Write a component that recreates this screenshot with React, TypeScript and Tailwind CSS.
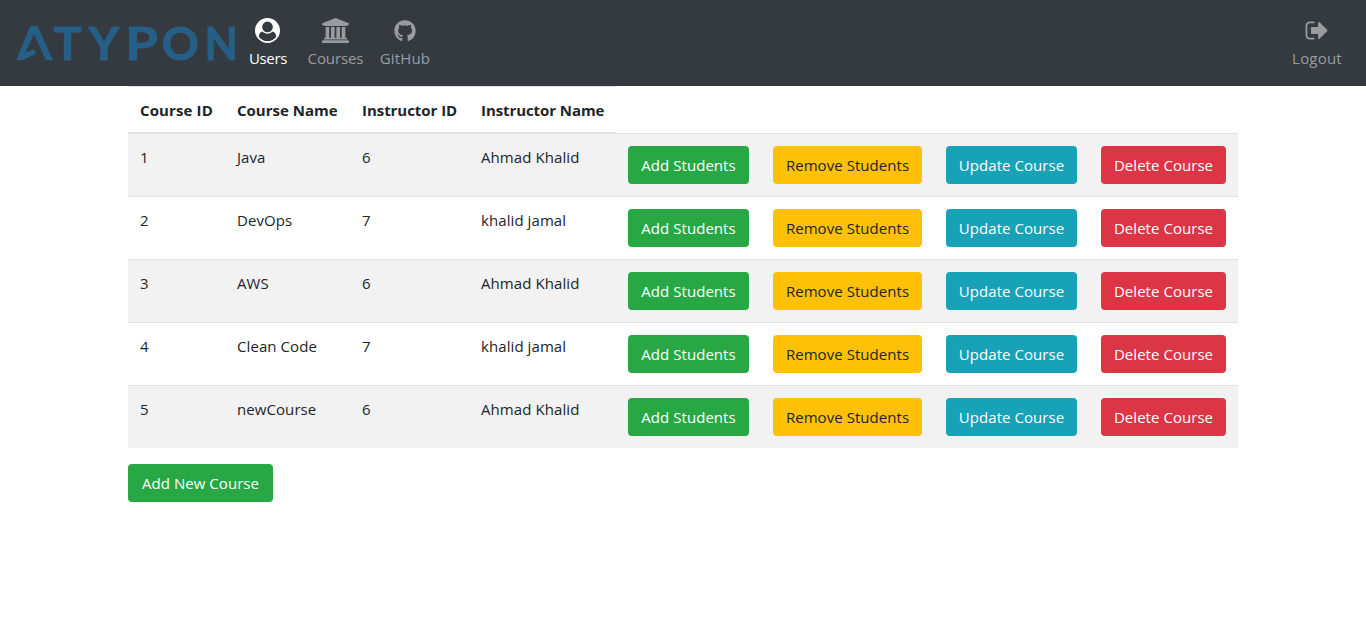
import type { ReactNode } from "react";
import { FaGithub } from "react-icons/fa";

const courses = [
  { id: 1, name: "Java", instructorId: 6, instructor: "Ahmad Khalid" },
  { id: 2, name: "DevOps", instructorId: 7, instructor: "khalid jamal" },
  { id: 3, name: "AWS", instructorId: 6, instructor: "Ahmad Khalid" },
  { id: 4, name: "Clean Code", instructorId: 7, instructor: "khalid jamal" },
  { id: 5, name: "newCourse", instructorId: 6, instructor: "Ahmad Khalid" },
];

function Logo() {
  return (
    <svg className="block h-[86px] w-[240px] overflow-visible" viewBox="0 0 240 86" fill="#265f86" role="img" aria-label="Atypon">
      <path d="M30.300 26h7.200L53 60.300h-7.200L34 34.200 25.500 52.600l8.700-3.400 1.900 4.600L22.700 60.300H16z" />
      <g fontFamily="Lato, sans-serif" fontWeight="700" fontSize="46.5" stroke="#265f86" strokeWidth="1">
        <text y="60" x="53.700 89">TY</text>
        <text transform="translate(125.2 60) scale(1.14 1)">P</text>
        <text transform="translate(162 60) scale(0.98 1)">O</text>
        <text transform="translate(204.800 60) scale(0.930 1)">N</text>
      </g>
    </svg>
  );
}

function UserIcon() {
  return (
    <svg className="block size-[25px]" viewBox="0 0 1792 1792" fill="currentColor" fillRule="evenodd">
      <path d="M1523 1339q-22-155-87.5-257.5t-184.5-118.5q-67 74-159.5 115.5t-195.5 41.5-195.5-41.5-159.5-115.5q-119 16-184.5 118.5t-87.5 257.5q106 150 271 237.5t356 87.5 356-87.5 271-237.5zm-243-699q0-159-112.5-271.5t-271.5-112.5-271.5 112.5-112.5 271.5 112.5 271.5 271.5 112.5 271.5-112.5 112.5-271.5zm512 256a896 896 0 1 1-1792 0 896 896 0 0 1 1792 0z" />
    </svg>
  );
}

function CoursesIcon() {
  return (
    <svg className="block h-[25px] w-[27px]" viewBox="0 0 1920 1792" fill="currentColor">
      <path d="M960 0l960 384v128h-128q0 26-20.500 45t-48.500 19h-1526q-28 0-48.500-19t-20.500-45h-128v-128zm-704 640h256v768h128v-768h256v768h128v-768h256v768h128v-768h256v768h59q28 0 48.500 19t20.500 45v64h-1664v-64q0-26 20.500-45t48.500-19h59v-768zm1595 960q28 0 48.500 19t20.500 45v128h-1920v-128q0-26 20.500-45t48.500-19h1782z" />
    </svg>
  );
}

function LogoutIcon() {
  return (
    <svg className="block h-[25px] w-[23px]" viewBox="24 0 1649 1792" fill="currentColor">
      <path d="M704 1440q0 4 1 20t.5 26.5-3 23.5-10 19.5-20.5 6.5h-320q-119 0-203.500-84.500t-84.500-203.500v-704q0-119 84.500-203.500t203.500-84.500h320q13 0 22.500 9.500t9.500 22.500q0 4 1 20t.5 26.5-3 23.5-10 19.5-20.5 6.5h-320q-66 0-113 47t-47 113v704q0 66 47 113t113 47h312l11.500 1 11.500 3 8 5.500 7 9 2 13.500zm928-544q0 26-19 45l-544 544q-19 19-45 19t-45-19-19-45v-288h-448q-26 0-45-19t-19-45v-384q0-26 19-45t45-19h448v-288q0-26 19-45t45-19 45 19l544 544q19 19 19 45z" />
    </svg>
  );
}

function NavItem({ icon, label, className, labelClass }: { icon: ReactNode; label: string; className: string; labelClass: string }) {
  return (
    <a className={`flex flex-col items-center pt-[17px] ${className}`}>
      <span className="flex h-[27px] items-center justify-center">{icon}</span>
      <span className={`mt-[2px] text-[15px] leading-6 whitespace-nowrap ${labelClass}`}>{label}</span>
    </a>
  );
}

function Button({ children, className }: { children: ReactNode; className: string }) {
  return (
    <button className={`flex h-[38px] items-center justify-center rounded-[4px] text-[15px] leading-6 tracking-[0.05px] whitespace-nowrap ${className}`}>
      {children}
    </button>
  );
}

export default function App() {
  return (
    <div className="min-h-[635px] bg-white font-['Open_Sans',sans-serif] text-[#212529]">
      <nav className="flex h-[86px] items-start bg-[#343a40]">
        <Logo />
        <NavItem className="w-[56px] text-white" icon={<span className="pr-px"><UserIcon /></span>} label="Users" labelClass="tracking-[-0.35px]" />
        <NavItem className="ml-[3px] w-[73px] text-[#999c9f]" icon={<CoursesIcon />} label="Courses" labelClass="tracking-[-0.1px]" />
        <NavItem className="w-[66px] text-[#999c9f]" icon={<FaGithub className="size-[22px]" />} label="GitHub" labelClass="tracking-[0.15px]" />
        <NavItem className="mr-4 ml-auto w-[66px] text-[#999c9f]" icon={<span className="pr-[2px]"><LogoutIcon /></span>} label="Logout" labelClass="tracking-[0.2px]" />
      </nav>
      <main className="ml-32 w-[1110px]">
        <div className="-mb-px grid h-[48px] w-[488px] grid-cols-[97px_125px_119px_147px] border-t border-b-2 border-[#dee2e6] pt-[11px] text-[15px] leading-6 font-bold whitespace-nowrap">
          <div className="pl-3 tracking-[0.12px]">Course ID</div>
          <div className="pl-3">Course Name</div>
          <div className="pl-3 tracking-[-0.05px]">Instructor ID</div>
          <div className="pl-3 tracking-[-0.08px]">Instructor Name</div>
        </div>
        {courses.map((c) => (
          <div
            key={c.id}
            className="grid h-[63px] grid-cols-[97px_125px_119px_147px_145px_173px_155px_149px] border-t border-[#dee2e6] text-[15px] leading-6 odd:bg-white even:bg-[#f2f2f2]"
          >
            <div className="pt-[11px] pl-3">{c.id}</div>
            <div className="pt-[11px] pl-3 tracking-[0.08px]">{c.name}</div>
            <div className="pt-[11px] pl-3">{c.instructorId}</div>
            <div className="pt-[11px] pl-3 tracking-[0.08px]">{c.instructor}</div>
            <Button className="mx-3 mt-3 bg-[#28a745] text-white">Add Students</Button>
            <Button className="mx-3 mt-3 bg-[#ffc107] text-[#212529]">Remove Students</Button>
            <Button className="mx-3 mt-3 bg-[#17a2b8] text-white">Update Course</Button>
            <Button className="mx-3 mt-3 bg-[#dc3545] text-white">Delete Course</Button>
          </div>
        ))}
        <Button className="mt-4 w-[145px] bg-[#28a745] text-white">Add New Course</Button>
      </main>
    </div>
  );
}
